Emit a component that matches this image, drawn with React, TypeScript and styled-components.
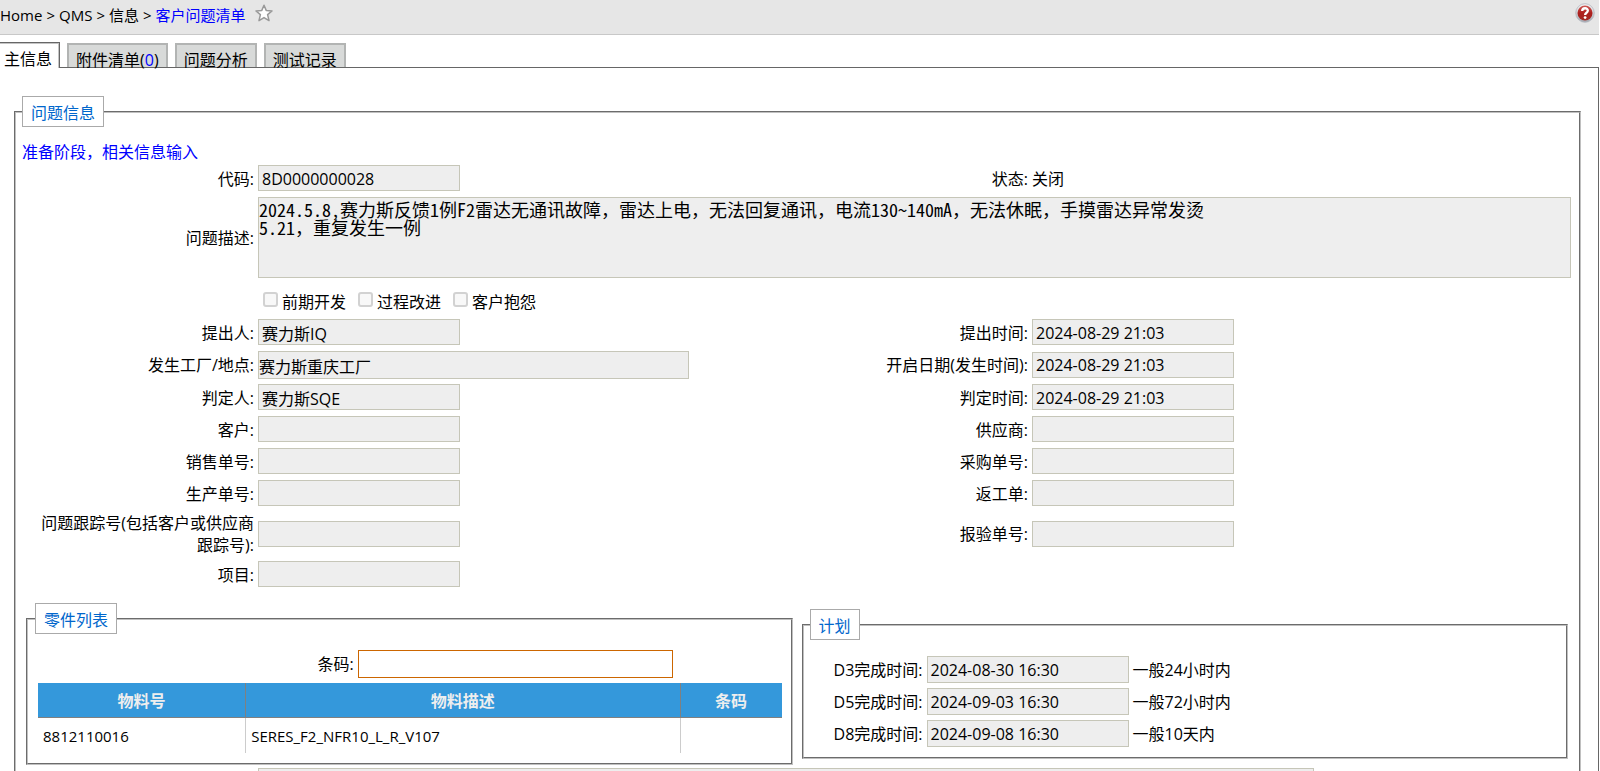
import React, { useId } from "react";
import styled, { createGlobalStyle, css } from "styled-components";

const GlobalStyle = createGlobalStyle`
  *, *::before, *::after { box-sizing: border-box; }
  body {
    margin: 0;
    background: #fff;
    color: #000;
    font: 16px/22px "Open Sans", "Noto Sans CJK SC", sans-serif;
  }
  input, textarea, button { font: inherit; color: inherit; margin: 0; border-radius: 0; }
`;

const Page = styled.div`
  margin-right: 1px;
`;

const Header = styled.header`
  display: flex;
  align-items: center;
  justify-content: space-between;
  height: 35px;
  padding: 0 4px 4px 0;
  background: #e6e6e6;
  border-bottom: 1px solid #c8c8c8;
`;

const Crumbs = styled.nav`
  display: flex;
  align-items: center;
  gap: 4px;
  font-size: 15px;
`;

const Crumb = styled.a<{ $current?: boolean }>`
  color: ${(p) => (p.$current ? "#0000ff" : "#000")};
  text-decoration: none;
`;

const IconButton = styled.button`
  display: flex;
  padding: 0 0 4px;
  border: 0;
  background: none;
`;

const StarButton = styled(IconButton)`
  padding-left: 5px;
`;

const TabBar = styled.div`
  display: flex;
  align-items: flex-end;
  gap: 7px;
  height: 32px;
`;

const Tab = styled.button<{ $active?: boolean }>`
  font-size: 16px;
  line-height: 14px;
  white-space: nowrap;
  ${(p) =>
    p.$active
      ? css`
          height: 26px;
          margin-bottom: -1px;
          padding: 9px 7px 2px 4px;
          border: solid #666;
          border-width: 1px 1px 0 0;
          box-shadow: inset -1px 1px 0 #c4c4c4;
          background: #fff;
        `
      : css`
          height: 24px;
          padding: 8px 7px 0;
          border: 2px solid #b2b4b3;
          border-bottom: 0;
          background: #d8dad9;
        `}
`;

const TabCount = styled.span`
  color: #0000ff;
`;

const Panel = styled.main`
  padding: 28px 17px 16px 14px;
  border: solid #666;
  border-width: 1px 1px 0 0;
`;

const Fieldset = styled.fieldset<{ $pad: string }>`
  min-width: 0;
  margin: 0;
  padding: ${(p) => p.$pad};
  border: 2px groove #c0c0c0;
`;

const Legend = styled.legend<{ $pull?: boolean }>`
  margin: 0 0 16px ${(p) => (p.$pull ? "-3px" : "0")};
  padding: 3px 8px 0;
  border: 1px solid #aaa;
  background: #fff;
  color: #0066cc;
  line-height: 26px;
`;

const MainLegend = styled(Legend)`
  margin-bottom: 14px;
`;

const StageNote = styled.p`
  margin: 0 0 2px;
  color: #0000ff;
`;

const Form = styled.div`
  display: flex;
  flex-direction: column;
  gap: 5px;
`;

const Row = styled.div`
  display: grid;
  grid-template-columns: 236px 1fr 235px 1fr;
  align-items: center;
  min-height: 27px;
`;

const Label = styled.label`
  padding: 0 4px;
  text-align: right;
`;

const fieldBox = css`
  display: block;
  border: 1px solid #c6c6b8;
  background: #eee;
  outline: none;
`;

const TextField = styled.input`
  ${fieldBox}
  width: 202px;
  height: 26px;
  margin-bottom: 1px;
  padding: 1px 3px 0;
`;

const WideField = styled.input`
  ${fieldBox}
  width: 100%;
  max-width: 431px;
  height: 28px;
  padding: 1px 0 0;
`;

const Description = styled.textarea`
  ${fieldBox}
  grid-column: 2 / -1;
  width: 100%;
  height: 81px;
  padding: 2px 0;
  resize: none;
  font: 300 18px/18px "Noto Sans Mono CJK SC", "Noto Sans CJK SC", monospace;
`;

const FollowUp = styled.textarea`
  ${fieldBox}
  width: 100%;
  max-width: 1056px;
  height: 81px;
  padding: 3px 0;
  resize: none;
`;

const FollowUpRow = styled(Row)`
  grid-template-columns: 236px 1fr;
  margin-top: 3px;
`;

const Checks = styled.div`
  display: flex;
  grid-column: 2 / -1;
  gap: 12px;
  height: 31px;
  padding: 8px 0 1px 5px;
`;

const CheckLabel = styled.label`
  display: flex;
  gap: 4px;
`;

const CheckBox = styled.input`
  appearance: none;
  width: 15px;
  height: 15px;
  margin-top: 1px;
  border: 2px solid #d2d2d2;
  border-radius: 3px;
  background: #f8f8f8;
`;

const Panels = styled.div`
  display: grid;
  grid-template-columns: 1fr 1fr;
  gap: 9px;
  align-items: center;
  margin: 15px 3px 0 4px;
`;

const BarcodeRow = styled.div`
  display: grid;
  grid-template-columns: 43fr 57fr;
  align-items: center;
  margin-bottom: 5px;
`;

const BarcodeField = styled.input`
  display: block;
  width: 315px;
  height: 28px;
  padding: 0 2px;
  border: 1px solid #cc6600;
  background: #fff;
  outline: none;
`;

const Table = styled.table`
  width: 100%;
  table-layout: fixed;
  border-collapse: separate;
  border-spacing: 0;
`;

const HeadCell = styled.th<{ $width?: string }>`
  width: ${(p) => p.$width ?? "auto"};
  height: 35px;
  padding: 2px 0 0;
  border: solid #808080;
  border-width: 0 1px 1px 0;
  background: #3498db;
  color: #eee;
  font-weight: 700;
  &:last-child { border-right: 0; }
`;

const Cell = styled.td`
  height: 35px;
  padding: 0 5px;
  border-right: 1px solid #ccc;
  font-size: 15px;
  &:last-child { border-right: 0; }
`;

const PlanRow = styled.div`
  display: grid;
  grid-template-columns: 117px 202px 1fr;
  align-items: center;
  height: 27px;
  & + & { margin-top: 5px; }
`;

const PlanField = styled(TextField)`
  height: 27px;
  margin: 0;
`;

const PlanHint = styled.span`
  padding-left: 4px;
`;

function StarIcon() {
  return (
    <svg width="18" height="18" viewBox="0 0 18 18" aria-hidden="true">
      <path
        d="M9 1.2 L11.2 6.4 L17 6.9 L12.6 10.6 L14 16.6 L9 13.6 L4 16.6 L5.4 10.6 L1 6.9 L6.8 6.4 Z"
        fill="#fff"
        stroke="#999"
        strokeWidth="1.5"
        strokeLinejoin="round"
      />
    </svg>
  );
}

function HelpIcon() {
  return (
    <svg width="20" height="20" viewBox="0 0 20 20" aria-hidden="true">
      <defs>
        <linearGradient id="helpRing" x1="0" y1="0" x2="0" y2="1">
          <stop offset="0" stopColor="#f6f6f6" />
          <stop offset="1" stopColor="#a3a8b0" />
        </linearGradient>
        <linearGradient id="helpFill" x1="0" y1="0" x2="0" y2="1">
          <stop offset="0" stopColor="#cf5b57" />
          <stop offset="0.5" stopColor="#ad1f1d" />
          <stop offset="1" stopColor="#a32a24" />
        </linearGradient>
      </defs>
      <circle cx="10" cy="10" r="9.3" fill="url(#helpRing)" stroke="#b4b8c0" strokeWidth="0.8" />
      <circle cx="10" cy="10" r="7.5" fill="url(#helpFill)" />
      <path
        d="M7.2 8 C7.2 4.3 13 4.4 12.8 7.8 C12.7 9.8 10.1 9.7 10.1 12"
        fill="none"
        stroke="#fff"
        strokeWidth="2.3"
      />
      <circle cx="10.1" cy="14.6" r="1.4" fill="#fff" />
    </svg>
  );
}

function Field({ label, value = "", wide }: { label: string; value?: string; wide?: boolean }) {
  const id = useId();
  const Box = wide ? WideField : TextField;
  return (
    <>
      <Label htmlFor={id}>{label}:</Label>
      <Box id={id} type="text" value={value} readOnly />
    </>
  );
}

const description =
  "2024.5.8,赛力斯反馈1例F2雷达无通讯故障，雷达上电，无法回复通讯，电流130~140mA，无法休眠，手摸雷达异常发烫\n5.21，重复发生一例";

const plans = [
  { label: "D3完成时间", value: "2024-08-30 16:30", hint: "一般24小时内" },
  { label: "D5完成时间", value: "2024-09-03 16:30", hint: "一般72小时内" },
  { label: "D8完成时间", value: "2024-09-08 16:30", hint: "一般10天内" },
];

export default function App() {
  return (
    <>
      <GlobalStyle />
      <Page>
        <Header>
          <Crumbs>
            <Crumb href="#">Home</Crumb>
            <span>&gt;</span>
            <Crumb href="#">QMS</Crumb>
            <span>&gt;</span>
            <Crumb href="#">信息</Crumb>
            <span>&gt;</span>
            <Crumb href="#" $current>客户问题清单</Crumb>
            <StarButton type="button" aria-label="收藏"><StarIcon /></StarButton>
          </Crumbs>
          <IconButton type="button" aria-label="帮助"><HelpIcon /></IconButton>
        </Header>

        <TabBar role="tablist">
          <Tab type="button" role="tab" aria-selected $active>主信息</Tab>
          <Tab type="button" role="tab">附件清单(<TabCount>0</TabCount>)</Tab>
          <Tab type="button" role="tab">问题分析</Tab>
          <Tab type="button" role="tab">测试记录</Tab>
        </TabBar>

        <Panel>
          <Fieldset $pad="0 8px 8px 6px">
            <MainLegend>问题信息</MainLegend>
            <StageNote>准备阶段，相关信息输入</StageNote>
            <Form>
              <Row>
                <Field label="代码" value="8D0000000028" />
                <Label as="span">状态:</Label>
                <span>关闭</span>
              </Row>
              <Row>
                <Label htmlFor="description">问题描述:</Label>
                <Description id="description" value={description} readOnly />
              </Row>
              <Row>
                <span />
                <Checks>
                  {["前期开发", "过程改进", "客户抱怨"].map((text) => (
                    <CheckLabel key={text}>
                      <CheckBox type="checkbox" disabled />
                      {text}
                    </CheckLabel>
                  ))}
                </Checks>
              </Row>
              <Row>
                <Field label="提出人" value="赛力斯IQ" />
                <Field label="提出时间" value="2024-08-29 21:03" />
              </Row>
              <Row>
                <Field label="发生工厂/地点" value="赛力斯重庆工厂" wide />
                <Field label="开启日期(发生时间)" value="2024-08-29 21:03" />
              </Row>
              <Row>
                <Field label="判定人" value="赛力斯SQE" />
                <Field label="判定时间" value="2024-08-29 21:03" />
              </Row>
              <Row>
                <Field label="客户" />
                <Field label="供应商" />
              </Row>
              <Row>
                <Field label="销售单号" />
                <Field label="采购单号" />
              </Row>
              <Row>
                <Field label="生产单号" />
                <Field label="返工单" />
              </Row>
              <Row>
                <Field label="问题跟踪号(包括客户或供应商跟踪号)" />
                <Field label="报验单号" />
              </Row>
              <Row>
                <Field label="项目" />
              </Row>
            </Form>

            <Panels>
              <Fieldset $pad="0 9px 10px 10px">
                <Legend $pull>零件列表</Legend>
                <BarcodeRow>
                  <Label htmlFor="barcode">条码:</Label>
                  <BarcodeField id="barcode" type="text" />
                </BarcodeRow>
                <Table>
                  <thead>
                    <tr>
                      <HeadCell $width="28%">物料号</HeadCell>
                      <HeadCell>物料描述</HeadCell>
                      <HeadCell $width="101px">条码</HeadCell>
                    </tr>
                  </thead>
                  <tbody>
                    <tr>
                      <Cell>8812110016</Cell>
                      <Cell>SERES_F2_NFR10_L_R_V107</Cell>
                      <Cell />
                    </tr>
                  </tbody>
                </Table>
              </Fieldset>

              <Fieldset $pad="0 6px 10px">
                <Legend>计划</Legend>
                {plans.map((p, i) => (
                  <PlanRow key={p.label}>
                    <Label htmlFor={`plan-${i}`}>{p.label}:</Label>
                    <PlanField id={`plan-${i}`} type="text" value={p.value} readOnly />
                    <PlanHint>{p.hint}</PlanHint>
                  </PlanRow>
                ))}
              </Fieldset>
            </Panels>

            <FollowUpRow>
              <span />
              <FollowUp aria-label="备注" readOnly />
            </FollowUpRow>
          </Fieldset>
        </Panel>
      </Page>
    </>
  );
}
